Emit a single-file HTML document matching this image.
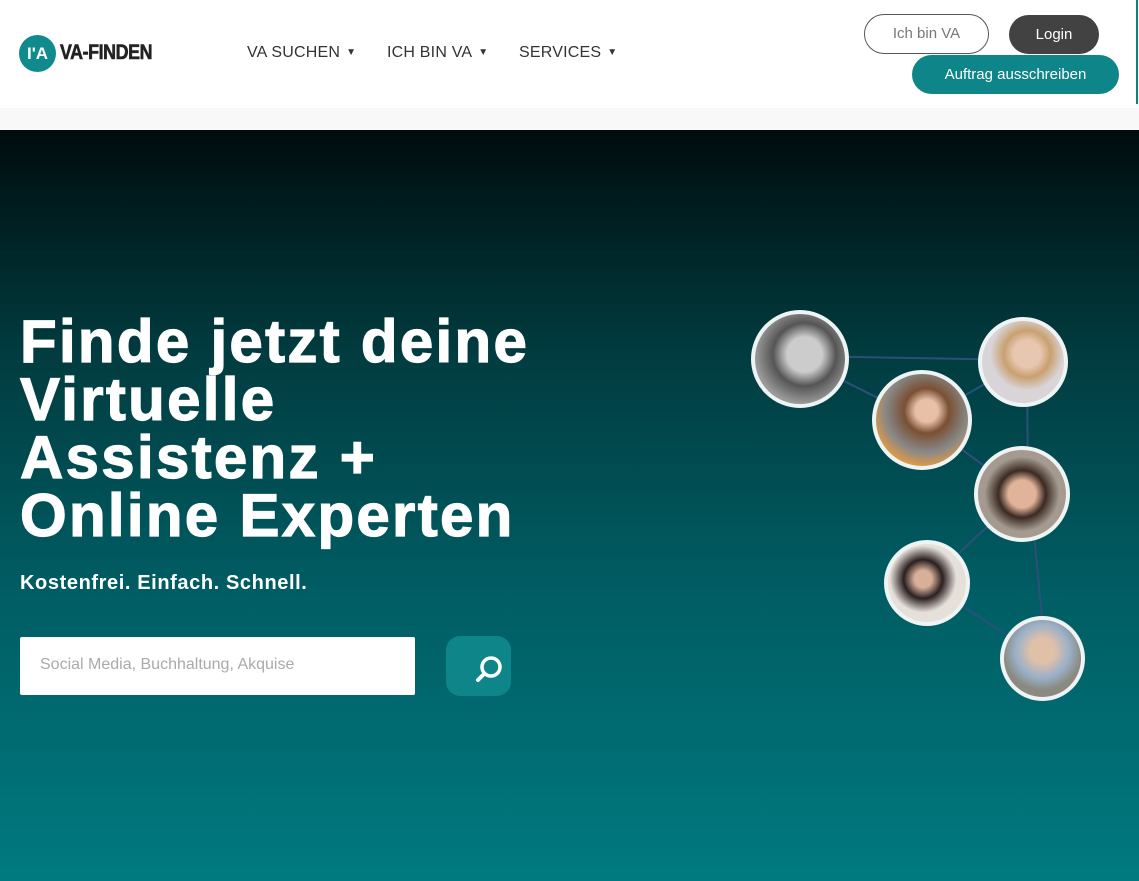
<!DOCTYPE html>
<html><head><meta charset="utf-8"><style>
*{margin:0;padding:0;box-sizing:border-box}
body{width:1139px;height:881px;overflow:hidden;font-family:"Liberation Sans",sans-serif;background:#fff;position:relative}
.hdr{position:absolute;left:0;top:0;width:1139px;height:108px;background:#fff}
.strip{position:absolute;left:0;top:108px;width:1139px;height:22px;background:#f8f8f8}
.hero{position:absolute;left:0;top:130px;width:1139px;height:751px;background:linear-gradient(180deg,#000c0d 0%,#013c40 30%,#005c62 60%,#007a80 100%)}
.logo{position:absolute;left:19px;top:35px;width:37px;height:37px;border-radius:50%;background:#118a8e;color:#fff;font-weight:bold;font-size:17px;line-height:37px;text-align:center}
.logot{position:absolute;left:60px;top:41px;font-size:21px;font-weight:900;color:#222;letter-spacing:-.5px;transform:scaleX(.85);transform-origin:left;-webkit-text-stroke:.6px #222}
.nav{position:absolute;top:44px;font-size:16px;color:#333;letter-spacing:.2px}
.nav span{font-size:10px;margin-left:6px;vertical-align:2px}
.btn{position:absolute;border-radius:20px;font-size:15px;text-align:center}
h1{position:absolute;left:20px;top:313px;color:#fff;font-size:60px;line-height:58px;font-weight:900;letter-spacing:2.3px;-webkit-text-stroke:1.2px #fff}
.sub{position:absolute;left:20px;top:572px;color:#fff;font-size:20px;font-weight:bold;letter-spacing:.6px}
.inp{position:absolute;left:20px;top:637px;width:395px;height:58px;background:#fff;border-radius:2px;color:#aaa;font-size:16px;padding:19px 0 0 20px}
.sbtn{position:absolute;left:446px;top:636px;width:65px;height:60px;border-radius:14px;background:#0e8589}
.av{position:absolute;border-radius:50%;border:4px solid #eef3f3}
</style></head><body>
<div class="hdr"></div><div class="strip"></div><div class="hero"></div>
<div style="position:absolute;left:1136px;top:0;width:2px;height:104px;background:#0e7f84"></div>
<div class="logo">I'A</div><div class="logot">VA-FINDEN</div>
<div class="nav" style="left:247px">VA SUCHEN<span>&#9660;</span></div>
<div class="nav" style="left:387px">ICH BIN VA<span>&#9660;</span></div>
<div class="nav" style="left:519px">SERVICES<span>&#9660;</span></div>
<div class="btn" style="left:864px;top:14px;width:125px;height:40px;border:1px solid #555;color:#777;line-height:38px">Ich bin VA</div>
<div class="btn" style="left:1009px;top:15px;width:90px;height:39px;background:#424242;color:#fff;line-height:39px">Login</div>
<div class="btn" style="left:912px;top:55px;width:207px;height:39px;background:#0e8589;color:#fff;line-height:39px">Auftrag ausschreiben</div>
<h1>Finde jetzt deine<br>Virtuelle<br>Assistenz +<br>Online Experten</h1>
<div class="sub">Kostenfrei. Einfach. Schnell.</div>
<div class="inp">Social Media, Buchhaltung, Akquise</div>
<div class="sbtn"><svg width="65" height="60" viewBox="0 0 65 60"><circle cx="45" cy="31" r="9" fill="none" stroke="#fff" stroke-width="3.5"/><line x1="38" y1="38" x2="32" y2="44" stroke="#fff" stroke-width="4" stroke-linecap="round"/></svg></div>
<svg style="position:absolute;left:0;top:0" width="1139" height="881"><g stroke="#2c4f7a" stroke-width="2" fill="none">
<line x1="800" y1="356" x2="1023" y2="360"/><line x1="800" y1="359" x2="922" y2="420"/><line x1="922" y1="420" x2="1023" y2="362"/>
<line x1="1027" y1="362" x2="1028" y2="494"/><line x1="922" y1="420" x2="1022" y2="494"/><line x1="1022" y1="494" x2="927" y2="583"/>
<line x1="1030" y1="494" x2="1046" y2="658"/><line x1="927" y1="583" x2="1042" y2="658"/></g></svg>
<div class="av" style="left:751px;top:310px;width:98px;height:98px;background:radial-gradient(circle at 55% 45%,#ccc 0 25%,#555 45%,#999 70%)"></div>
<div class="av" style="left:978px;top:317px;width:90px;height:90px;background:radial-gradient(circle at 55% 40%,#e8c7b0 0 20%,#c9a070 35%,#d9d4d8 55%),linear-gradient(#ddd,#ddd)"></div>
<div class="av" style="left:872px;top:370px;width:100px;height:100px;background:radial-gradient(circle at 55% 40%,#e8c0a8 0 15%,#7a5033 30%,#888 55%,#e09a45 75%)"></div>
<div class="av" style="left:974px;top:446px;width:96px;height:96px;background:radial-gradient(circle at 50% 50%,#e0b39a 0 22%,#3a2a22 38%,#a49a90 60%)"></div>
<div class="av" style="left:884px;top:540px;width:86px;height:86px;background:radial-gradient(circle at 45% 45%,#d8b09a 0 14%,#2a2020 32%,#e6e0da 55%)"></div>
<div class="av" style="left:1000px;top:616px;width:85px;height:85px;background:radial-gradient(circle at 50% 40%,#e1c0a8 0 20%,#9ab0c8 45%,#8a8a80 65%)"></div>
</body></html>
